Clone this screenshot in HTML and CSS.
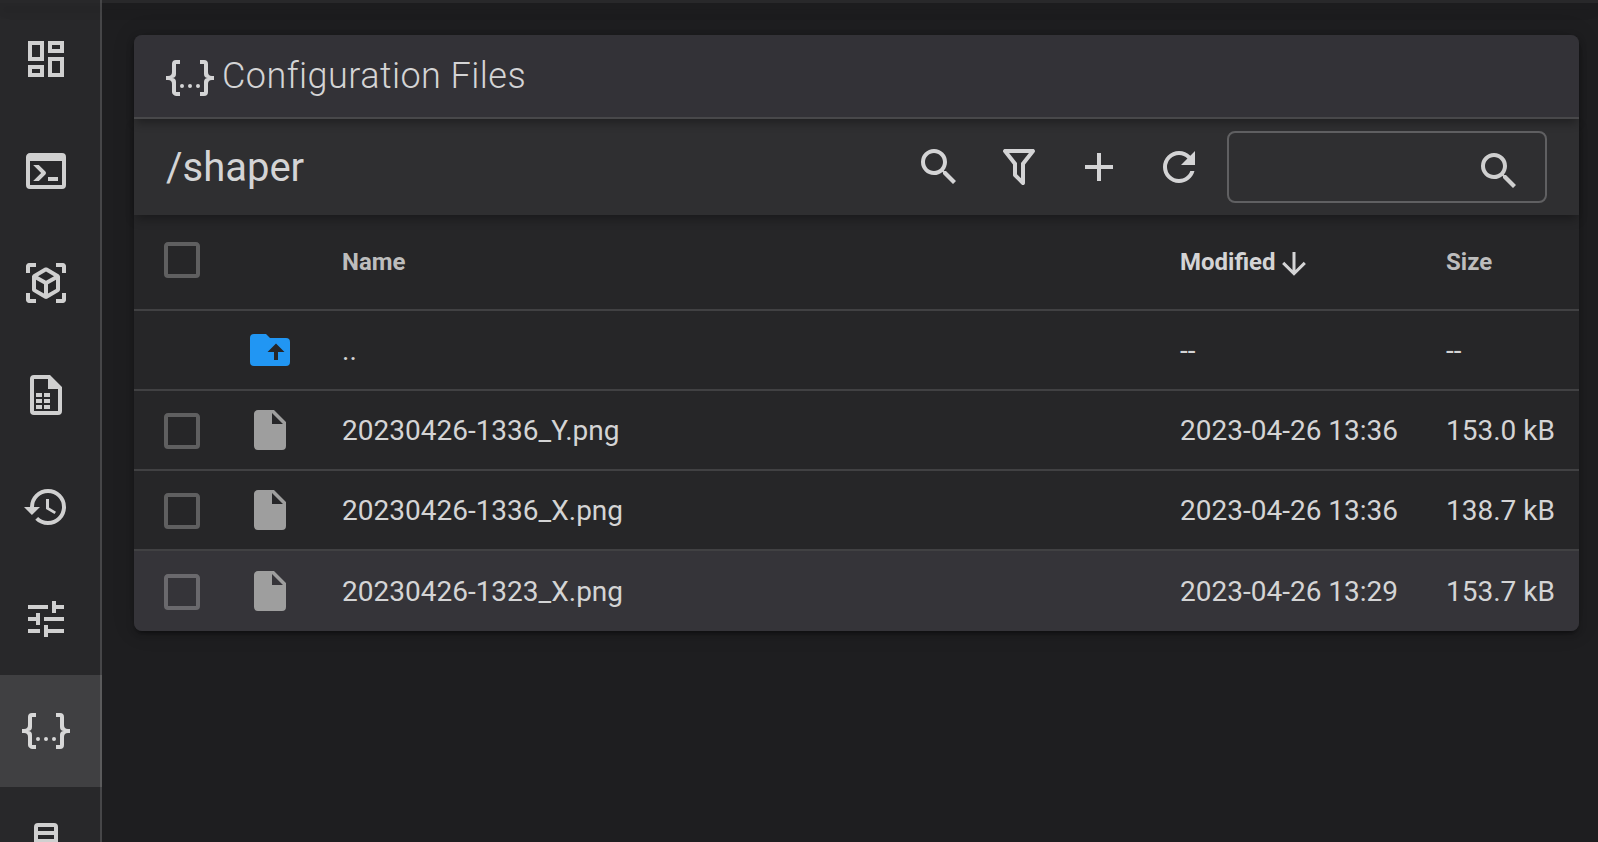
FILE: index.html
```html
<!DOCTYPE html>
<html lang="en">
<head>
<meta charset="utf-8">
<title>Configuration Files</title>
<link rel="stylesheet" href="styles.css">
</head>
<body>
<svg class="defs" aria-hidden="true">
  <symbol id="json" viewBox="0 0 24 24"><path d="M5,3H7V5H5V10A2,2 0 0,1 3,12A2,2 0 0,1 5,14V19H7V21H5C3.93,20.73 3,20.1 3,19V15A2,2 0 0,0 1,13H0V11H1A2,2 0 0,0 3,9V5A2,2 0 0,1 5,3M19,3A2,2 0 0,1 21,5V9A2,2 0 0,0 23,11H24V13H23A2,2 0 0,0 21,15V19A2,2 0 0,1 19,21H17V19H19V14A2,2 0 0,1 21,12A2,2 0 0,1 19,10V5H17V3H19M12,15A1,1 0 0,1 13,16A1,1 0 0,1 12,17A1,1 0 0,1 11,16A1,1 0 0,1 12,15M8,15A1,1 0 0,1 9,16A1,1 0 0,1 8,17A1,1 0 0,1 7,16A1,1 0 0,1 8,15M16,15A1,1 0 0,1 17,16A1,1 0 0,1 16,17A1,1 0 0,1 15,16A1,1 0 0,1 16,15Z"/></symbol>
  <symbol id="magnify" viewBox="0 0 24 24"><path d="M9.5,3A6.5,6.5 0 0,1 16,9.5C16,11.11 15.41,12.59 14.44,13.73L14.71,14H15.5L20.5,19L19,20.5L14,15.5V14.71L13.73,14.44C12.59,15.41 11.11,16 9.5,16A6.5,6.5 0 0,1 3,9.5A6.5,6.5 0 0,1 9.5,3M9.5,5C7,5 5,7 5,9.5C5,12 7,14 9.5,14C12,14 14,12 14,9.5C14,7 12,5 9.5,5Z"/></symbol>
  <symbol id="checkbox" viewBox="0 0 24 24"><path d="M19,3H5C3.89,3 3,3.89 3,5V19A2,2 0 0,0 5,21H19A2,2 0 0,0 21,19V5C21,3.89 20.1,3 19,3M19,5V19H5V5H19Z"/></symbol>
  <symbol id="file" viewBox="0 0 24 24"><path d="M13,9V3.5L18.5,9M6,2C4.89,2 4,2.89 4,4V20A2,2 0 0,0 6,22H18A2,2 0 0,0 20,20V8L14,2H6Z"/></symbol>
</svg>
<header class="appbar"></header>
<div class="layout">
  <nav class="sidebar">
    <a class="nav-item"><svg class="icon" viewBox="0 0 24 24"><path d="M19,5V7H15V5H19M9,5V11H5V5H9M19,13V19H15V13H19M9,17V19H5V17H9M21,3H13V9H21V3M11,3H3V13H11V3M21,11H13V21H21V11M11,15H3V21H11V15Z"/></svg></a>
    <a class="nav-item"><svg class="icon" viewBox="0 0 24 24"><path d="M20,19V7H4V19H20M20,3A2,2 0 0,1 22,5V19A2,2 0 0,1 20,21H4A2,2 0 0,1 2,19V5C2,3.89 2.9,3 4,3H20M13,17V15H18V17H13M9.58,13L5.57,9H8.4L11.7,12.3C12.09,12.69 12.09,13.33 11.7,13.72L8.42,17H5.59L9.58,13Z"/></svg></a>
    <a class="nav-item"><svg class="icon" viewBox="0 0 24 24"><path d="M17,22V20H20V17H22V20.5C22,20.89 21.84,21.24 21.54,21.54C21.24,21.84 20.89,22 20.5,22H17M7,22H3.5C3.11,22 2.76,21.84 2.46,21.54C2.16,21.24 2,20.89 2,20.5V17H4V20H7V22M17,2H20.5C20.89,2 21.24,2.16 21.54,2.46C21.84,2.76 22,3.11 22,3.5V7H20V4H17V2M7,2V4H4V7H2V3.5C2,3.11 2.16,2.76 2.46,2.46C2.76,2.16 3.11,2 3.5,2H7M13,17.25L17,14.95V10.36L13,12.66V17.25M12,10.92L16,8.63L12,6.28L8,8.63L12,10.92M7,14.95L11,17.25V12.66L7,10.36V14.95M18.23,7.59C18.73,7.91 19,8.34 19,8.91V15.23C19,15.8 18.73,16.23 18.23,16.55L12.75,19.73C12.25,20.05 11.75,20.05 11.25,19.73L5.77,16.55C5.27,16.23 5,15.8 5,15.23V8.91C5,8.34 5.27,7.91 5.77,7.59L11.25,4.41C11.5,4.28 11.75,4.22 12,4.22C12.25,4.22 12.5,4.28 12.75,4.41L18.23,7.59Z"/></svg></a>
    <a class="nav-item"><svg class="icon" viewBox="0 0 24 24"><path fill-rule="evenodd" d="M14,2H6A2,2 0 0,0 4,4V20A2,2 0 0,0 6,22H18A2,2 0 0,0 20,20V8L14,2ZM18,20H6V4H13V9H18V20Z"/><path d="M7,11H10V13H7ZM11,11H14V13H11ZM7,14H10V16H7ZM11,14H14V16H11ZM7,17H10V19H7ZM11,17H14V19H11Z"/></svg></a>
    <a class="nav-item"><svg class="icon" viewBox="0 0 24 24"><path d="M13.5,8H12V13L16.28,15.54L17,14.33L13.5,12.25V8M13,3A9,9 0 0,0 4,12H1L4.96,16.03L9,12H6A7,7 0 0,1 13,5A7,7 0 0,1 20,12A7,7 0 0,1 13,19C11.07,19 9.32,18.21 8.06,16.94L6.64,18.36C8.27,20 10.5,21 13,21A9,9 0 0,0 22,12A9,9 0 0,0 13,3Z"/></svg></a>
    <a class="nav-item"><svg class="icon" viewBox="0 0 24 24"><path d="M3,17V19H9V17H3M3,5V7H13V5H3M13,21V19H21V17H13V15H11V21H13M7,9V11H3V13H7V15H9V9H7M21,13V11H11V13H21M15,9H17V7H21V5H17V3H15V9Z"/></svg></a>
    <a class="nav-item active"><svg class="icon"><use href="#json"/></svg></a>
    <a class="nav-item"><svg class="icon" viewBox="0 0 24 24"><path d="M8,2H16A2,2 0 0,1 18,4V20A2,2 0 0,1 16,22H8A2,2 0 0,1 6,20V4A2,2 0 0,1 8,2M8,4V6H16V4H8M16,8H8V10H16V8M16,18H14V20H16V18Z"/></svg></a>
  </nav>
  <main class="content">
    <section class="card">
      <div class="card-title"><svg class="icon"><use href="#json"/></svg><h1 class="title">Configuration Files</h1></div>
      <div class="toolbar">
        <span class="path">/shaper</span>
        <div class="actions">
          <svg class="icon"><use href="#magnify"/></svg>
          <svg class="icon" viewBox="0 0 24 24"><path d="M15,19.88C15.04,20.18 14.94,20.5 14.71,20.71C14.32,21.1 13.69,21.1 13.3,20.71L9.29,16.7C9.06,16.47 8.96,16.16 9,15.87V10.75L4.21,4.62C3.87,4.19 3.95,3.56 4.38,3.22C4.57,3.08 4.78,3 5,3V3H19V3C19.22,3 19.43,3.08 19.62,3.22C20.05,3.56 20.13,4.19 19.79,4.62L15,10.75V19.88M7.04,5L11,10.06V15.58L13,17.58V10.05L16.96,5H7.04Z"/></svg>
          <svg class="icon" viewBox="0 0 24 24"><path d="M19,13H13V19H11V13H5V11H11V5H13V11H19V13Z"/></svg>
          <svg class="icon" viewBox="0 0 24 24"><path d="M17.65,6.35C16.2,4.9 14.21,4 12,4A8,8 0 0,0 4,12A8,8 0 0,0 12,20C15.73,20 18.84,17.45 19.73,14H17.65C16.83,16.33 14.61,18 12,18A6,6 0 0,1 6,12A6,6 0 0,1 12,6C13.66,6 15.14,6.69 16.22,7.78L13,11H20V4L17.65,6.35Z"/></svg>
        </div>
        <div class="search"><svg class="icon"><use href="#magnify"/></svg></div>
      </div>
      <div class="table">
        <div class="row head">
          <svg class="icon check"><use href="#checkbox"/></svg><span></span>
          <span>Name</span>
          <span class="sorted">Modified<svg class="sort" viewBox="0 0 24 24"><path d="M11,4H13V16L18.5,10.5L19.92,11.92L12,19.84L4.08,11.92L5.5,10.5L11,16V4Z"/></svg></span>
          <span>Size</span>
        </div>
        <div class="row">
          <span></span>
          <svg class="icon folder" viewBox="0 0 24 24"><path d="M20,6A2,2 0 0,1 22,8V18A2,2 0 0,1 20,20H4A2,2 0 0,1 2,18V6A2,2 0 0,1 4,4H10L12,6H20M10.75,13H14V17H16V13H19.25L15,8.75"/></svg>
          <span>..</span><span>--</span><span>--</span>
        </div>
        <div class="row">
          <svg class="icon check"><use href="#checkbox"/></svg><svg class="icon file"><use href="#file"/></svg>
          <span>20230426-1336_Y.png</span><span>2023-04-26 13:36</span><span>153.0 kB</span>
        </div>
        <div class="row">
          <svg class="icon check"><use href="#checkbox"/></svg><svg class="icon file"><use href="#file"/></svg>
          <span>20230426-1336_X.png</span><span>2023-04-26 13:36</span><span>138.7 kB</span>
        </div>
        <div class="row hover">
          <svg class="icon check"><use href="#checkbox"/></svg><svg class="icon file"><use href="#file"/></svg>
          <span>20230426-1323_X.png</span><span>2023-04-26 13:29</span><span>153.7 kB</span>
        </div>
      </div>
    </section>
  </main>
</div>
</body>
</html>
```

FILE: styles.css
```css
* { box-sizing: border-box; }
body {
  margin: 0;
  height: 842px;
  overflow: hidden;
  background: #1e1e20;
  color: #d4d4d5;
  font-family: Roboto, sans-serif;
}
.defs { display: none; }
.icon { width: 48px; height: 48px; flex: none; fill: currentColor; display: block; }

.appbar {
  position: relative;
  z-index: 2;
  height: 3px;
  background: linear-gradient(90deg, #28282a 100px, #464648 100px, #464648 102px, #28282a 102px);
  box-shadow: 0 4px 8px -2px rgba(0,0,0,.2), 0 8px 10px rgba(0,0,0,.14), 0 2px 20px rgba(0,0,0,.12);
}
.layout { display: flex; height: 839px; overflow: hidden; }
.sidebar {
  width: 102px;
  flex: none;
  background: #28282a;
  box-shadow: inset -2px 0 0 #464648;
}
.nav-item {
  display: flex;
  align-items: center;
  height: 112px;
  padding-left: 22px;
  color: #d0d0d0;
}
.nav-item.active { background: rgba(255,255,255,.115); color: #d8d8d8; }

.content { flex: 1; padding: 32px 19px 0 32px; }
.card {
  border-radius: 8px;
  background: #262628;
  box-shadow: 0 6px 2px -4px rgba(0,0,0,.2), 0 4px 4px rgba(0,0,0,.14), 0 2px 10px rgba(0,0,0,.12), 0 0 24px rgba(0,0,0,.1);
}
.card-title {
  position: relative;
  z-index: 2;
  display: flex;
  align-items: center;
  gap: 8px;
  height: 84px;
  padding: 0 32px;
  border-bottom: 2px solid #48484a;
  border-radius: 8px 8px 0 0;
  background: #333237;
  box-shadow: 0 6px 10px -2px rgba(0,0,0,.32);
}
.card-title .icon { margin-top: 4px; }
.title { margin: 0; font-size: 36px; line-height: 64px; font-weight: 300; letter-spacing: .45px; }
.toolbar {
  position: relative;
  z-index: 1;
  display: flex;
  align-items: center;
  height: 96px;
  padding: 0 32px;
  background: #2f2f31;
  box-shadow: 0 6px 10px -2px rgba(0,0,0,.32);
}
.path { flex: 1; font-size: 40px; }
.actions { display: flex; gap: 32px; margin-right: 24px; }
.search {
  display: flex;
  align-items: center;
  justify-content: flex-end;
  width: 320px;
  height: 72px;
  padding: 8px 22px 0 0;
  border: 2px solid #606062;
  border-radius: 8px;
  color: #cfcfcf;
}
.row {
  display: grid;
  grid-template-columns: 84px 96px 838px 266px 1fr;
  align-items: center;
  height: 80px;
  padding-left: 28px;
  border-bottom: 2px solid #414143;
  font-size: 28px;
  white-space: nowrap;
}
.head { height: 96px; font-size: 24px; font-weight: 700; color: #bdbdbd; }
.hover { border-bottom: 0; border-radius: 0 0 8px 8px; background: #353439; }
.check { color: #5f5f60; margin-top: 2px; margin-left: -4px; }
.head .check { margin-top: -4px; }
.hover .check { color: #6a696d; }
.file { color: #9e9e9e; }
.folder { color: #2196f3; }
.sorted { display: flex; align-items: center; color: #d4d4d5; }
.sort { width: 36px; height: 36px; margin: 4px 0 0; fill: currentColor; }
```
